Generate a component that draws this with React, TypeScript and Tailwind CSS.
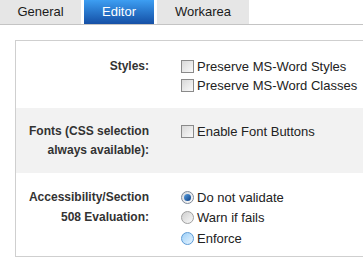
import React from 'react';

const font = { fontFamily: '"Liberation Sans", Arial, sans-serif' };

const Check = ({ label }: { label: string }) => (
  <div className="flex items-center h-[19px]">
    <span className="w-[13px] h-[13px] border border-[#8a8a8a] bg-gradient-to-br from-[#d8d8d8] to-[#fafafa] shrink-0" />
    <span className="ml-[3px] text-[13px] text-[#222]">{label}</span>
  </div>
);

const Radio = ({ label, state }: { label: string; state: 'on' | 'off' | 'hover' }) => (
  <div className="flex items-center h-[20.5px]">
    {state === 'on' && (
      <span className="w-[13px] h-[13px] rounded-full border border-[#7f8a99] bg-gradient-to-br from-[#d6d9de] to-[#fbfbfb] flex items-center justify-center shrink-0">
        <span className="w-[7px] h-[7px] rounded-full bg-gradient-to-br from-[#5aa0e0] to-[#0c3f86]" />
      </span>
    )}
    {state === 'off' && (
      <span className="w-[13px] h-[13px] rounded-full border border-[#a0a0a0] bg-gradient-to-br from-[#cfcfcf] to-[#fafafa] shrink-0" />
    )}
    {state === 'hover' && (
      <span className="w-[13px] h-[13px] rounded-full border border-[#5c9bd6] bg-gradient-to-br from-[#9ccff7] to-[#e8f5ff] shrink-0" />
    )}
    <span className="ml-[3px] text-[13px] text-[#222]">{label}</span>
  </div>
);

export default function App() {
  return (
    <div className="w-[363px] h-[262px] overflow-hidden bg-white" style={font}>
      {/* Tabs */}
      <div className="flex h-[25px] border-b border-[#c4c4c4]">
        <div className="w-[81px] bg-[#e6e6e6] flex items-center justify-center text-[13px] text-[#1a1a1a]">General</div>
        <div className="w-[70px] ml-[3px] bg-gradient-to-b from-[#3d9ef2] to-[#1650a6] flex items-center justify-center text-[13px] text-white">Editor</div>
        <div className="w-[92px] ml-[3px] bg-[#e6e6e6] flex items-center justify-center text-[13px] text-[#1a1a1a]">Workarea</div>
      </div>

      {/* Panel */}
      <div className="ml-[15px] mt-[15px] w-[400px] border border-[#cfcfcf]">
        <div className="flex h-[67px] pt-[16px]">
          <div className="w-[133px] text-right font-bold text-[12px] text-[#333] leading-[19px]">Styles:</div>
          <div className="ml-[32px]">
            <Check label="Preserve MS-Word Styles" />
            <Check label="Preserve MS-Word Classes" />
          </div>
        </div>
        <div className="flex h-[65px] pt-[14px] bg-[#f2f2f2]">
          <div className="w-[133px] text-right font-bold text-[12px] text-[#333] leading-[19px]">
            Fonts (CSS selection
            <br />
            always available):
          </div>
          <div className="ml-[32px]">
            <Check label="Enable Font Buttons" />
          </div>
        </div>
        <div className="flex h-[83px] pt-[14px]">
          <div className="w-[133px] text-right font-bold text-[12px] text-[#333] leading-[20px]">
            Accessibility/Section
            <br />
            508 Evaluation:
          </div>
          <div className="ml-[32px]">
            <Radio label="Do not validate" state="on" />
            <Radio label="Warn if fails" state="off" />
            <Radio label="Enforce" state="hover" />
          </div>
        </div>
      </div>
    </div>
  );
}
